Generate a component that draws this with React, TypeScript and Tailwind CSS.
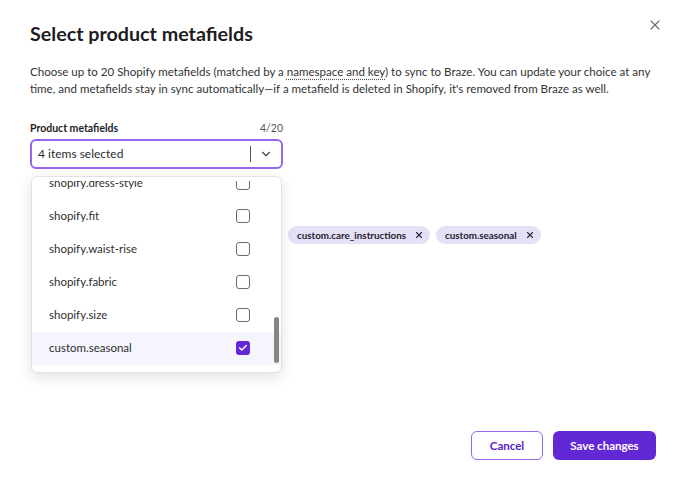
import { X, ChevronDown, Check } from 'lucide-react';

const options = [
  { name: 'shopify.dress-style', checked: false },
  { name: 'shopify.fit', checked: false },
  { name: 'shopify.waist-rise', checked: false },
  { name: 'shopify.fabric', checked: false },
  { name: 'shopify.size', checked: false },
  { name: 'custom.seasonal', checked: true },
];

function Tag({ label, className = '' }: { label: string; className?: string }) {
  return (
    <span
      className={`flex h-[18px] items-center justify-between gap-[8px] rounded-full bg-[#e3e0f8] pl-[9px] pr-[6px] text-[9.8px] font-bold text-[#1f1d2b] ${className}`}
    >
      <span className="whitespace-nowrap">{label}</span>
      <X size={10} strokeWidth={2.6} className="shrink-0 text-[#2a2838]" />
    </span>
  );
}

export default function App() {
  return (
    <div
      className="relative h-[487px] w-[682px] overflow-hidden bg-white text-[#2b2b2b]"
      style={{ fontFamily: 'Lato, "Noto Sans", sans-serif' }}
    >
      <button className="absolute right-[19px] top-[17px] text-[#6b6b76]">
        <X size={16} strokeWidth={1.6} />
      </button>

      <div className="px-[30px] pt-[23px]">
        <h1 className="text-[19.7px] font-bold leading-[22px] text-[#1d1d1f]">
          Select product metafields
        </h1>

        <p className="mt-[18px] text-[11.55px] leading-[17px] text-[#333]">
          Choose up to 20 Shopify metafields (matched by a{' '}
          <span className="underline decoration-dotted decoration-[#555] underline-offset-[3px]">
            namespace and key
          </span>
          ) to sync to Braze. You can update your choice at any time, and metafields stay in sync
          automatically—if a metafield is deleted in Shopify, it's removed from Braze as well.
        </p>

        <div className="relative mt-[24px] w-[253px]">
          <div className="flex items-center justify-between text-[10.5px] leading-[14px]">
            <span className="font-bold text-[#1d1d1f]">Product metafields</span>
            <span className="text-[#555]">4/20</span>
          </div>
          <div className="mt-[4px] flex h-[30px] items-center rounded-[6px] border-2 border-[#9466f1] pl-[6px] pr-[8px]">
            <span className="flex-1 text-[12px] text-[#2b2b2b]">4 items selected</span>
            <span className="h-[16px] w-px bg-[#555]" />
            <ChevronDown size={14} strokeWidth={2} className="ml-[8px] text-[#444]" />
          </div>

          <div className="absolute left-[1px] top-[55px] z-10 h-[197px] w-[251px] rounded-[6px] border border-[#e2e2e6] bg-white py-[4px] shadow-[0_4px_14px_rgba(0,0,0,0.12)]">
            <div className="h-full overflow-hidden">
              <div className="-mt-[14.5px]">
                {options.map((o) => (
                  <div
                    key={o.name}
                    className={`flex h-[33px] items-center justify-between pl-[17px] pr-[31px] text-[11.5px] text-[#2f2f2f] ${
                      o.checked ? 'bg-[#f6f4fd]' : ''
                    }`}
                  >
                    <span>{o.name}</span>
                    {o.checked ? (
                      <span className="flex h-[14px] w-[14px] items-center justify-center rounded-[3px] bg-[#6328d6]">
                        <Check size={10} strokeWidth={3.5} className="text-white" />
                      </span>
                    ) : (
                      <span className="h-[14px] w-[14px] rounded-[3px] border-[1.5px] border-[#6a6a70]" />
                    )}
                  </div>
                ))}
              </div>
            </div>
            <div className="absolute right-[2px] top-[140px] h-[46px] w-[5px] rounded-full bg-[#858585]" />
          </div>
        </div>

        <div className="ml-[4px] mt-[57px] flex gap-[6px]">
          <Tag label="shopify.color" className="w-[122px]" />
          <Tag label="shopify.gender" className="w-[120px]" />
          <Tag label="custom.care_instructions" />
          <Tag label="custom.seasonal" />
        </div>
      </div>

      <div className="absolute bottom-[27px] right-[26px] flex gap-[10px]">
        <button className="h-[29px] w-[72px] rounded-[6px] border border-[#9466f1] text-[11.5px] font-bold text-[#5a22c9]">
          Cancel
        </button>
        <button className="h-[29px] w-[103px] rounded-[6px] bg-[#6328d6] text-[11.5px] font-bold text-white">
          Save changes
        </button>
      </div>
    </div>
  );
}
